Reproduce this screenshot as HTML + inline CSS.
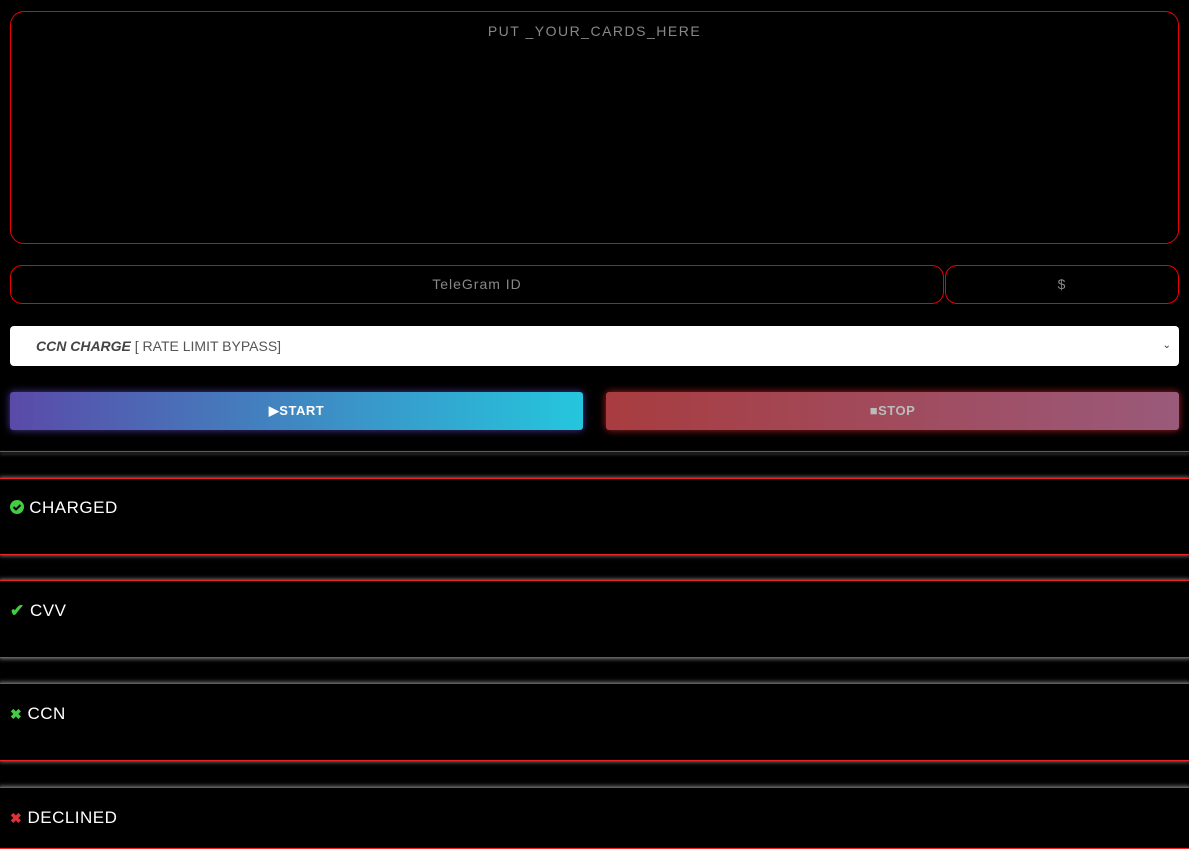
<!DOCTYPE html>
<html><head><style>
body{margin:0;background:#000;width:1189px;height:838px;overflow:hidden;font-family:"Liberation Sans",sans-serif;position:relative}
.ta{position:absolute;left:10px;top:11px;width:1169px;height:233px;border:1px solid #e00;border-radius:14px;box-sizing:border-box;color:#888;text-align:center;font-size:14px;letter-spacing:1.5px;padding-top:11px}
.in{position:absolute;top:265px;height:39px;border:1px solid #e00;border-radius:12px;box-sizing:border-box;color:#888;text-align:center;font-size:14px;line-height:37px;letter-spacing:1px}
.sel{position:absolute;left:10px;top:326px;width:1169px;height:40px;background:#fff;border-radius:4px;box-sizing:border-box;font-size:14px;color:#555;line-height:40px;padding-left:26px}
.sel i{font-weight:bold;color:#444}
.btn{position:absolute;top:392px;height:38px;border-radius:3px;color:#fff;font-weight:bold;font-size:13px;text-align:center;line-height:38px;letter-spacing:.5px}
.card{position:absolute;left:0;width:1189px;border-top:1px solid #e22;border-bottom:1px solid #e22;box-shadow:0 0 4px 1px #777;background:#000}
.lab{position:absolute;left:10px;color:#fff;font-size:17px;letter-spacing:.5px}
</style></head><body>
<div class="ta">PUT _YOUR_CARDS_HERE</div>
<div class="in" style="left:10px;width:934px">TeleGram ID</div>
<div class="in" style="left:945px;width:234px">$</div>
<div class="sel"><i>CCN CHARGE</i> [ RATE LIMIT BYPASS]<span style="position:absolute;right:8px;font-size:10px;color:#333">&#8964;</span></div>
<div class="btn" style="left:10px;width:573px;background:linear-gradient(90deg,#5a4aa8,#25c6dd);box-shadow:0 0 8px #4a3a9a">&#9654;START</div>
<div class="btn" style="left:606px;width:573px;background:linear-gradient(90deg,#a83c40,#9a5a7a);color:#bbb;box-shadow:0 0 8px #a22">&#9632;STOP</div>
<div style="position:absolute;left:0;top:451px;width:1189px;height:1px;background:#e22;box-shadow:0 2px 3px 0 #777"></div>
<div class="card" style="top:478px;height:75px"></div>
<div class="card" style="top:580px;height:76px"></div>
<div class="card" style="top:683px;height:76px"></div>
<div class="card" style="top:787px;height:60px"></div>
<div class="lab" style="top:498px"><svg width="14" height="14" viewBox="0 0 14 14" style="vertical-align:-1px"><circle cx="7" cy="7" r="7" fill="#4c4"/><path d="M3.5 7l2.5 2.5 4.5-4.5" stroke="#000" stroke-width="2" fill="none"/></svg> CHARGED</div>
<div class="lab" style="top:601px"><span style="color:#4c4;font-weight:bold">&#10004;</span> CVV</div>
<div class="lab" style="top:704px"><span style="color:#4c4;font-weight:bold;font-size:14px">&#10006;</span> CCN</div>
<div class="lab" style="top:808px"><span style="color:#d33;font-weight:bold;font-size:14px">&#10006;</span> DECLINED</div>
</body></html>
